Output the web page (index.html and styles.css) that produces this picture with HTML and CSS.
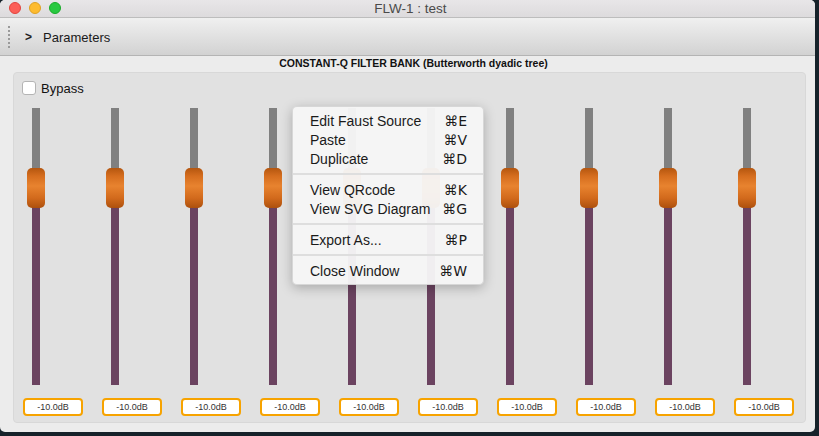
FILE: index.html
```html
<!DOCTYPE html>
<html>
<head>
<meta charset="utf-8">
<link rel="stylesheet" href="styles.css">
</head>
<body>
<div class="window">
  <div class="titlebar">
    <div class="lights">
      <span class="light red"></span>
      <span class="light yellow"></span>
      <span class="light green"></span>
    </div>
    <div class="title">FLW-1 : test</div>
  </div>
  <div class="toolbar">
    <span class="grip"></span>
    <span class="chev">&gt;</span>
    <span class="tool-label">Parameters</span>
  </div>
  <div class="content">
    <div class="heading">CONSTANT-Q FILTER BANK (Butterworth dyadic tree)</div>
    <div class="group">
      <label class="bypass"><span class="check"></span><span>Bypass</span></label>
      <div class="bank">
        <div class="col"><div class="slider"><div class="track"></div><div class="thumb"></div></div><div class="value">-10.0dB</div></div>
        <div class="col"><div class="slider"><div class="track"></div><div class="thumb"></div></div><div class="value">-10.0dB</div></div>
        <div class="col"><div class="slider"><div class="track"></div><div class="thumb"></div></div><div class="value">-10.0dB</div></div>
        <div class="col"><div class="slider"><div class="track"></div><div class="thumb"></div></div><div class="value">-10.0dB</div></div>
        <div class="col"><div class="slider"><div class="track"></div><div class="thumb"></div></div><div class="value">-10.0dB</div></div>
        <div class="col"><div class="slider"><div class="track"></div><div class="thumb"></div></div><div class="value">-10.0dB</div></div>
        <div class="col"><div class="slider"><div class="track"></div><div class="thumb"></div></div><div class="value">-10.0dB</div></div>
        <div class="col"><div class="slider"><div class="track"></div><div class="thumb"></div></div><div class="value">-10.0dB</div></div>
        <div class="col"><div class="slider"><div class="track"></div><div class="thumb"></div></div><div class="value">-10.0dB</div></div>
        <div class="col"><div class="slider"><div class="track"></div><div class="thumb"></div></div><div class="value">-10.0dB</div></div>
      </div>
    </div>
  </div>
  <div class="menu">
    <div class="item"><span>Edit Faust Source</span><span class="key">⌘E</span></div>
    <div class="item"><span>Paste</span><span class="key">⌘V</span></div>
    <div class="item"><span>Duplicate</span><span class="key">⌘D</span></div>
    <div class="sep"></div>
    <div class="item"><span>View QRcode</span><span class="key">⌘K</span></div>
    <div class="item"><span>View SVG Diagram</span><span class="key">⌘G</span></div>
    <div class="sep"></div>
    <div class="item"><span>Export As...</span><span class="key">⌘P</span></div>
    <div class="sep"></div>
    <div class="item"><span>Close Window</span><span class="key">⌘W</span></div>
  </div>
</div>
</body>
</html>
```
FILE: styles.css
```css
* { box-sizing: border-box; }
html, body { margin: 0; padding: 0; }
body {
  background: #16222a;
  width: 819px;
  height: 436px;
  overflow: hidden;
  font-family: "Liberation Sans", Arial, sans-serif;
}
.window {
  position: relative;
  width: 815px;
  height: 432px;
  background: #ececec;
  border-radius: 5px;
  overflow: hidden;
}
.titlebar {
  position: relative;
  height: 18px;
  background: linear-gradient(#e8e6e8, #dddbdd);
  border-bottom: 1px solid #bdbdbd;
  display: flex;
  align-items: center;
  justify-content: center;
}
.lights {
  position: absolute;
  left: 9px;
  top: 2px;
  display: flex;
  gap: 8px;
}
.light {
  width: 12px;
  height: 12px;
  border-radius: 50%;
}
.red { background: #fc5f58; border: 1px solid #e0443e; }
.yellow { background: #fdbb2f; border: 1px solid #dea123; }
.green { background: #29c941; border: 1px solid #1aab29; }
.title {
  font-size: 13.5px;
  color: #4a4a4a;
  line-height: 17px;
  padding-left: 6px;
}
.toolbar {
  height: 38px;
  background: linear-gradient(#f0f0f0, #d2d2d2);
  border-bottom: 1px solid #b4b4b4;
  display: flex;
  align-items: center;
  padding-top: 1px;
}
.grip {
  width: 2px;
  height: 22px;
  margin-left: 8px;
  background: repeating-linear-gradient(#9a9a9a 0 2px, transparent 2px 4px);
}
.chev {
  margin-left: 15px;
  font-size: 12px;
  font-weight: bold;
  color: #222;
}
.tool-label {
  margin-left: 11px;
  font-size: 13px;
  color: #1a1a1a;
}
.content {
  padding: 0 9px 0 13px;
}
.heading {
  text-align: center;
  font-size: 10.5px;
  font-weight: bold;
  color: #111;
  height: 15px;
  line-height: 14px;
  padding-left: 8px;
}
.group {
  margin-top: 1px;
  width: 793px;
  height: 351px;
  background: #e1e1e1;
  border: 1px solid #d8d8d8;
  border-radius: 4px;
  padding: 8px 0 0 8px;
}
.bypass {
  display: flex;
  align-items: center;
  gap: 5px;
  font-size: 13px;
  color: #111;
  height: 14px;
}
.check {
  width: 14px;
  height: 14px;
  background: #fff;
  border: 1px solid #b4b4b4;
  border-radius: 3px;
}
.bank {
  display: flex;
  margin-top: 13px;
}
.col {
  flex: 0 0 79px;
  width: 79px;
  display: flex;
  flex-direction: column;
  align-items: flex-start;
}
.slider {
  position: relative;
  width: 18px;
  height: 277px;
  margin-left: 5px;
  display: flex;
  justify-content: center;
}
.track {
  width: 8px;
  height: 100%;
  background: linear-gradient(#808080 0 80px, #6b4360 80px 100%);
}
.thumb {
  position: absolute;
  left: 0;
  top: 60px;
  width: 18px;
  height: 40px;
  border-radius: 5px;
  background: linear-gradient(#b4560f 0%, #d56d1e 20%, #e8832f 45%, #d26a1c 75%, #ad500d 100%);
}
.value {
  margin-top: 13px;
  margin-left: 1px;
  width: 60px;
  height: 18px;
  border: 2px solid #f7a300;
  border-radius: 4px;
  background: #fff;
  font-size: 9px;
  color: #333;
  display: flex;
  align-items: center;
  justify-content: center;
}
.menu {
  position: absolute;
  left: 292px;
  top: 106px;
  width: 192px;
  padding: 4px 0 4px;
  background: rgba(246, 246, 246, 0.96);
  border: 1px solid rgba(0, 0, 0, 0.12);
  border-radius: 5px;
  box-shadow: 0 3px 12px rgba(0, 0, 0, 0.25);
}
.item {
  height: 19px;
  display: flex;
  align-items: center;
  justify-content: space-between;
  padding: 0 16px 0 17px;
  font-size: 14px;
  color: #1a1a1a;
}
.key {
  font-family: "DejaVu Sans", "Liberation Sans", sans-serif;
  font-size: 14px;
}
.sep {
  height: 2px;
  margin: 5px 0;
  background: #dedede;
}
```
